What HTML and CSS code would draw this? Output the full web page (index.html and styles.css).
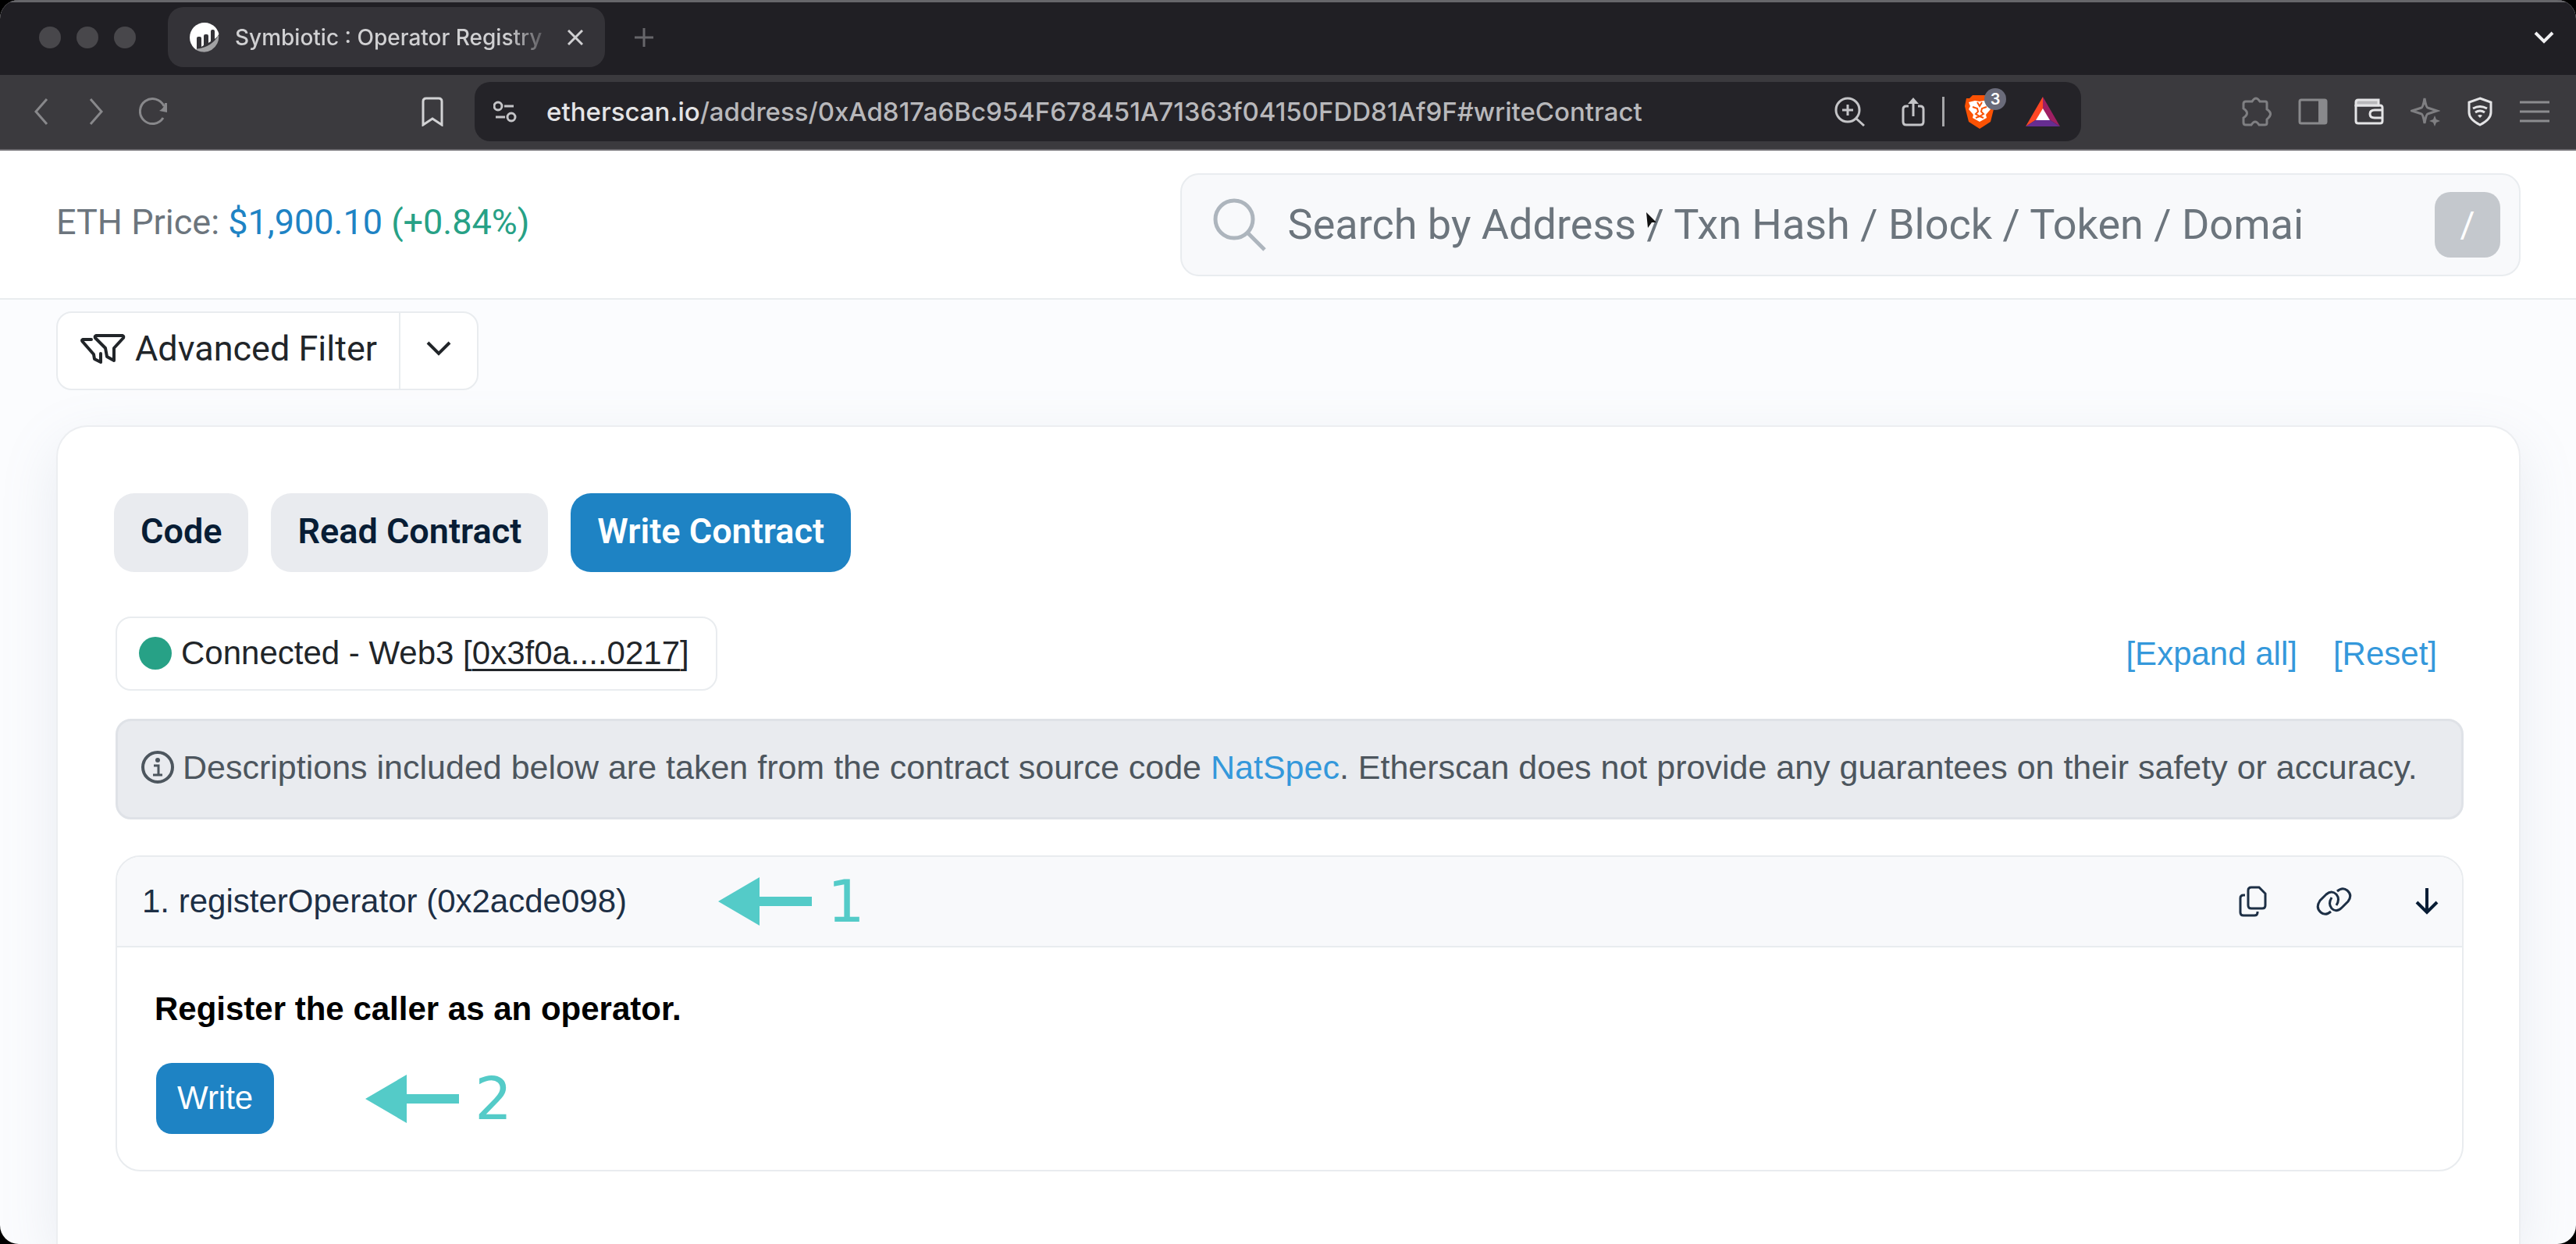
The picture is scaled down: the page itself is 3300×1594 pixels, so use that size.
FILE: index.html
```html
<!DOCTYPE html>
<html lang="en">
<head>
<meta charset="utf-8">
<meta name="viewport" content="width=device-width, initial-scale=1">
<title>Symbiotic : Operator Registry</title>
<link rel="stylesheet" href="styles.css">
</head>
<body>
<div class="window">
  <div class="tabstrip">
    <div class="lights"><span class="light"></span><span class="light"></span><span class="light"></span></div>
    <div class="tab">
      <svg class="favicon" viewBox="0 0 38 38" width="38" height="38" aria-hidden="true">
        <circle cx="19" cy="19" r="19" fill="#fff"/>
        <path d="M9 38V20q0-2 2-2h2q2 0 2 2v11l3-2V17q0-2 2-2h2q2 0 2 2v9l3-2V11q0-2 2-2h1q2 0 2 2v10q4-3 6-7v24z" fill="#343338"/>
        <path d="M7 34Q28 32 37 16A19 19 0 0 1 7 34z" fill="#a2a2a4"/>
      </svg>
      <span class="tab-title">Symbiotic : Operator Registry</span>
      <button class="icon-btn" aria-label="Close tab"><svg viewBox="0 0 20 20" width="20" height="20"><path d="M1 1l18 18M19 1L1 19" stroke="#d0d0d2" stroke-width="3" fill="none"/></svg></button>
    </div>
    <button class="icon-btn new-tab" aria-label="New tab"><svg viewBox="0 0 24 24" width="24" height="24"><path d="M12 0v24M0 12h24" stroke="#66666a" stroke-width="3"/></svg></button>
    <button class="icon-btn tab-menu" aria-label="Tab list"><svg viewBox="0 0 26 16" width="26" height="16"><path d="M2 2l11 11L24 2" fill="none" stroke="#f0f0f2" stroke-width="4"/></svg></button>
  </div>
  <div class="toolbar">
    <div class="nav">
      <button class="icon-btn" aria-label="Back"><svg viewBox="0 0 18 34" width="18" height="34"><path d="M16 1L2 17l14 16" fill="none" stroke="#88888b" stroke-width="3"/></svg></button>
      <button class="icon-btn" aria-label="Forward"><svg viewBox="0 0 24 34" width="24" height="34"><path d="M8 1l14 16L8 33" fill="none" stroke="#88888b" stroke-width="3"/></svg></button>
      <button class="icon-btn" aria-label="Reload"><svg viewBox="0 0 38 38" width="38" height="38"><path d="M31 27A16 16 0 1 1 32 12" fill="none" stroke="#88888b" stroke-width="3"/><path d="M36 8v12l-10-2q6-3 7-10z" fill="#88888b"/></svg></button>
    </div>
    <button class="icon-btn" aria-label="Bookmark"><svg viewBox="0 0 28 38" width="28" height="38"><path d="M2 36V6q0-4 4-4h16q4 0 4 4v30l-12-8z" fill="none" stroke="#d2d2d4" stroke-width="3"/></svg></button>
    <div class="urlbar">
      <svg viewBox="0 0 30 28" width="30" height="28" fill="none" stroke="#c4c4c7" stroke-width="3" aria-hidden="true"><circle cx="6" cy="7" r="5"/><path d="M14 7h12M3 21h12"/><circle cx="23" cy="21" r="5"/></svg>
      <span class="url"><b>etherscan.io</b>/address/0xAd817a6Bc954F678451A71363f04150FDD81Af9F#writeContract</span>
      <div class="url-actions">
        <button class="icon-btn" aria-label="Zoom"><svg viewBox="0 0 40 38" width="40" height="38" fill="none" stroke="#c4c4c7" stroke-width="3"><circle cx="17" cy="17" r="15"/><path d="M17 10v14M10 17h14M28 28l10 9"/></svg></button>
        <button class="icon-btn" aria-label="Share"><svg viewBox="0 0 30 38" width="30" height="38" fill="none" stroke="#c4c4c7" stroke-width="3"><path d="M9 12H6q-4 0-4 4v16q0 4 4 4h18q4 0 4-4V16q0-4-4-4h-3"/><path d="M15 25V4"/><path d="M8 9l7-8 7 8z" fill="#c4c4c7" stroke="none"/></svg></button>
      </div>
      <span class="divider"></span>
      <button class="icon-btn shields" aria-label="Shields">
        <svg viewBox="0 0 38 44" width="38" height="44"><path d="M10 1h18l4 4h4l2 10-5 20-14 9L5 35 0 15 2 5h4z" fill="#fb5204"/><path d="M5 10l8-2 6 1 6-1 8 2-2 5 2 4-6 7 1 4-9 5-9-5 1-4-6-7 2-4z" fill="#fff"/><path d="M10 16l6 2 1 4-3 3 5 3 5-3-3-3 1-4 6-2M16 10l3 5 3-5M14 30l5-2 5 2" fill="none" stroke="#fb5204" stroke-width="2"/></svg>
        <span class="badge">3</span>
      </button>
      <button class="icon-btn" aria-label="Rewards"><svg viewBox="0 0 44 38" width="44" height="38"><path d="M22 0v16l-8 13L0 38z" fill="#ff4724"/><path d="M22 0l22 38-14-9-8-13z" fill="#9e1f63"/><path d="M0 38l14-9h16l14 9z" fill="#662d91"/><path d="M22 15l9 15H13z" fill="#fff"/></svg></button>
    </div>
    <div class="extensions">
      <button class="icon-btn" aria-label="Extensions"><svg viewBox="0 0 38 38" width="38" height="38" fill="none" stroke="#7f7f82" stroke-width="3"><path d="M5 6h8q5-8 10 0h7q2 0 2 2v8q8 5 2 11l-2 2v5q0 2-3 2h-7q-5-8-10 0H5q-3 0-3-3v-6q9-6 0-12V9q0-3 3-3z"/></svg></button>
      <button class="icon-btn" aria-label="Sidebar"><svg viewBox="0 0 38 34" width="38" height="34"><rect x="2" y="2" width="34" height="30" rx="2" fill="none" stroke="#89898c" stroke-width="3"/><path d="M26 2h11v30H26z" fill="#89898c"/></svg></button>
      <button class="icon-btn" aria-label="Wallet"><svg viewBox="0 0 38 34" width="38" height="34" fill="none" stroke="#e4e4e6" stroke-width="3"><path d="M2 8v21q0 3 3 3h28q3 0 3-3V12q0-3-3-3H3"/><path d="M2 9V5q0-3 3-3h26v7z" fill="#b8b8bb"/><path d="M36 15H26q-6 0-6 5t6 5h10"/></svg></button>
      <button class="icon-btn" aria-label="Assistant"><svg viewBox="0 0 38 38" width="38" height="38" fill="none" stroke="#7f7f82" stroke-width="3"><path d="M18 2q2 12 4 12l12 4-12 4q-2 0-4 12-2-12-4-12L2 18l12-4q2 0 4-12z"/><path d="M31 24l2 5 5 2-5 2-2 5-2-5-5-2 5-2z" fill="#7f7f82" stroke="none"/></svg></button>
      <button class="icon-btn" aria-label="VPN"><svg viewBox="0 0 34 38" width="34" height="38" fill="none" stroke="#e4e4e6" stroke-width="3"><path d="M17 2l14 5v13q0 9-14 16Q3 29 3 20V7z"/><path d="M8 15q9-5 18 0M11 20q6-4 12 0"/><path d="M14 24q3-2 6 0l-3 3z" fill="#e4e4e6" stroke="none"/></svg></button>
      <button class="icon-btn" aria-label="Menu"><svg viewBox="0 0 38 28" width="38" height="28" stroke="#8c8c8f" stroke-width="3"><path d="M0 2h38M0 14h38M0 26h38"/></svg></button>
    </div>
  </div>

  <header class="site-header">
    <p class="price">ETH Price: <a href="#price">$1,900.10</a> <span class="up">(+0.84%)</span></p>
    <form class="search">
      <svg viewBox="0 0 68 68" width="68" height="68" fill="none" stroke="#adb5bd" stroke-width="5" aria-hidden="true"><circle cx="27" cy="27" r="24"/><path d="M44 44l22 22"/></svg>
      <input class="search-input" type="text" aria-label="Search" placeholder="Search by Address / Txn Hash / Block / Token / Domai">
      <kbd class="key">/</kbd>
      <svg class="pointer" viewBox="0 0 16 22" width="16" height="22" aria-hidden="true"><path d="M1 0l13 13H8l-5 7z" fill="#111"/></svg>
    </form>
  </header>

  <main class="page">
    <div class="filter">
      <button class="filter-main">
        <svg viewBox="0 0 58 40" width="58" height="40" fill="none" stroke="#212529" stroke-width="4" stroke-linejoin="round" stroke-linecap="round" aria-hidden="true"><path d="M20 3h34q2 1 1 3L43 19v16l-9-5-2-11L19 6q-1-2 1-3z"/><path d="M14 8H3q-2 1 0 3l14 16 1 6 8 4V26"/></svg>
        Advanced Filter
      </button>
      <button class="filter-more" aria-label="More filters"><svg viewBox="0 0 32 20" width="32" height="20"><path d="M2 2l14 14L30 2" fill="none" stroke="#212529" stroke-width="4"/></svg></button>
    </div>

    <section class="card">
      <nav class="pills">
        <button class="pill">Code</button>
        <button class="pill">Read Contract</button>
        <button class="pill active">Write Contract</button>
      </nav>
      <div class="status-row">
        <div class="connected"><span class="dot"></span><span>Connected - Web3 [<a href="#account">0x3f0a....0217</a>]</span></div>
        <div class="links"><a href="#expand">[Expand all]</a><a href="#reset">[Reset]</a></div>
      </div>
      <div class="alert">
        <svg viewBox="0 0 44 44" width="44" height="44" aria-hidden="true"><circle cx="22" cy="22" r="19" fill="none" stroke="#4d565e" stroke-width="4"/><circle cx="22" cy="13" r="3" fill="#4d565e"/><path d="M17 20h6v11M16 32h12" fill="none" stroke="#4d565e" stroke-width="3"/></svg>
        <p>Descriptions included below are taken from the contract source code <a href="#natspec">NatSpec</a>. Etherscan does not provide any guarantees on their safety or accuracy.</p>
      </div>
      <article class="method">
        <div class="method-head">
          <h2>1. registerOperator (0x2acde098)</h2>
          <div class="mark"><svg viewBox="0 0 120 62" width="120" height="62" aria-hidden="true"><path d="M0 31L53 0v25h67v12H53v25z" fill="#54cbc8"/></svg><span>1</span></div>
          <div class="method-actions">
            <button class="icon-btn" aria-label="Copy"><svg viewBox="0 0 36 40" width="36" height="40" fill="none" stroke="#1d2f45" stroke-width="3"><path d="M16 2h10l8 8v15q0 4-4 4H16q-4 0-4-4V6q0-4 4-4z"/><path d="M8 12H6q-4 0-4 4v18q0 4 4 4h14q4 0 4-4v-1"/></svg></button>
            <button class="icon-btn" aria-label="Link"><svg viewBox="0 0 46 36" width="46" height="36" fill="none" stroke="#1d2f45" stroke-width="3"><path d="M19 31Q12 37 6 32Q-1 26 5 17L13 9Q20 3 26 9Q31 15 26 23"/><path d="M27 5Q34-1 40 4Q47 10 41 18L33 26Q26 33 20 27Q15 21 20 13"/></svg></button>
            <button class="icon-btn collapse" aria-label="Collapse"><svg viewBox="0 0 30 34" width="30" height="34" fill="none" stroke="#081d35" stroke-width="4"><path d="M15 0v31M2 18l13 13 13-13"/></svg></button>
          </div>
        </div>
        <div class="method-body">
          <p class="desc">Register the caller as an operator.</p>
          <div class="run">
            <button class="write">Write</button>
            <div class="mark"><svg viewBox="0 0 120 62" width="120" height="62" aria-hidden="true"><path d="M0 31L53 0v25h67v12H53v25z" fill="#54cbc8"/></svg><span>2</span></div>
          </div>
        </div>
      </article>
    </section>
  </main>
</div>
</body>
</html>
```
FILE: styles.css
```css
* { box-sizing: border-box; }
html { background: #000; }
body { margin: 0; font-family: "Liberation Sans", Arial, sans-serif; font-size: 42px; line-height: 48px; color: #212529; }
p, h2 { margin: 0; }
a { color: #3498db; text-decoration: none; }
button { font: inherit; color: inherit; border: 0; background: none; padding: 0; }
svg { display: block; flex: none; }

.window { display: flex; flex-direction: column; height: 100vh; border-radius: 24px; overflow: hidden; background: #fbfcfe; }
.icon-btn { display: flex; align-items: center; justify-content: center; flex: none; }

.tabstrip { display: flex; align-items: center; padding: 6px 28px 10px 50px; background: #201f24; border-top: 3px solid #66666a; flex: none; }
.lights { display: flex; gap: 20px; margin-right: 41px; }
.light { width: 28px; height: 28px; border-radius: 50%; background: #48474b; }
.tab { display: flex; align-items: center; width: 560px; height: 77px; padding: 0 28px; border-radius: 20px; background: #343338; }
.tab-title { flex: 1; margin: 0 16px 0 20px; white-space: nowrap; font: 500 28px/40px Inter, sans-serif; color: #d0d0d2; -webkit-mask-image: linear-gradient(90deg, #000 85%, transparent); mask-image: linear-gradient(90deg, #000 85%, transparent); }
.new-tab { margin-left: 38px; }
.tab-menu { margin-left: auto; }

.toolbar { display: flex; align-items: center; padding: 9px 34px 10px 44px; background: #3b3a3e; border-bottom: 2px solid #6b6a6e; flex: none; }
.nav { display: flex; align-items: center; gap: 46px; margin-right: 324px; }
.urlbar { display: flex; align-items: center; flex: 1; height: 76px; margin: 0 206px 0 40px; padding: 0 27px 0 24px; border-radius: 20px; background: #242328; }
.url { flex: 1; margin-left: 38px; white-space: nowrap; font: 500 33px/40px Inter, sans-serif; color: #b8b8bb; }
.url b { font-weight: 500; color: #e4e4e6; }
.url-actions { display: flex; gap: 46px; }
.divider { width: 3px; height: 38px; margin: 0 26px 0 22px; background: #a5a5a8; }
.shields { position: relative; margin-right: 40px; }
.badge { position: absolute; left: 25px; top: -8px; width: 28px; height: 28px; border-radius: 50%; background: #6a6b7a; color: #fff; font: 600 20px/28px Inter, sans-serif; text-align: center; }
.extensions { display: flex; align-items: center; gap: 34px; }

.site-header { display: flex; align-items: center; justify-content: space-between; padding: 29px 71px 28px 72px; background: #fff; border-bottom: 2px solid #e9ecef; font-family: Roboto, sans-serif; }
.price { font-size: 45px; line-height: 56px; color: #6c757d; margin-bottom: 6px; }
.price a { color: #1e83c4; }
.up { color: #27a186; }
.search { position: relative; display: flex; align-items: center; width: 54.4%; height: 132px; padding: 0 24px 0 40px; border: 2px solid #e9ecef; border-radius: 24px; background: #f8f9fb; }
.search-input { flex: 1; min-width: 0; margin-left: 28px; padding: 0; border: 0; outline: 0; background: none; font: 54px/64px Roboto, sans-serif; color: #6c757d; }
.search-input::placeholder { color: #6c757d; opacity: 1; }
.key { width: 84px; height: 84px; border-radius: 20px; background: #c4c8cd; color: #fff; font: 46px/84px Roboto, sans-serif; text-align: center; }
.pointer { position: absolute; left: 594px; top: 48px; }

.page { display: flex; flex-direction: column; flex: 1; min-height: 0; padding: 15px 71px 0 72px; }
.filter { display: flex; align-self: flex-start; margin-bottom: 45px; border: 2px solid #e9ecef; border-radius: 20px; background: #fff; font-family: Roboto, sans-serif; font-size: 45px; line-height: 56px; }
.filter-main { display: flex; align-items: center; gap: 12px; padding: 18px 28px 23px 29px; border-right: 2px solid #e9ecef; }
.filter-more { padding: 0 33px 6px; }

.card { flex: 1; padding: 85px 71px 0 74px; border: 2px solid #eceef1; border-bottom: 0; border-radius: 40px 40px 0 0; background: #fff; box-shadow: 0 24px 72px rgba(130, 140, 165, 0.15); }
.pills { display: flex; gap: 29px; margin: 0 0 57px -2px; font: 600 45px/56px Roboto, sans-serif; color: #081d35; }
.pill { padding: 21px 34px 24px; border-radius: 26px; background: #e9ebef; }
.pill.active { background: #1e83c4; color: #fff; }
.status-row { display: flex; align-items: center; justify-content: space-between; margin-bottom: 36px; }
.connected { display: flex; align-items: center; gap: 12px; padding: 21px 34px 22px 28px; border: 2px solid #e9ecef; border-radius: 20px; }
.connected a { color: inherit; text-decoration: underline; text-decoration-thickness: 3px; text-underline-offset: 6px; }
.dot { width: 42px; height: 42px; border-radius: 50%; background: #27a186; }
.links { display: flex; gap: 46px; margin-right: 34px; }
.alert { display: flex; align-items: center; gap: 10px; padding: 35px 29px 40px; margin-bottom: 46px; border: 3px solid #dfe2e7; border-radius: 20px; background: #e9ebef; color: #4d565e; font-size: 43px; white-space: nowrap; }
.method { border: 2px solid #e9ecef; border-radius: 32px; overflow: hidden; }
.method-head { display: flex; align-items: center; padding: 26px 30px 26px 32px; background: #f8f9fb; border-bottom: 2px solid #e9ecef; }
.method-head h2 { font: inherit; color: #1d2f45; }
.mark { display: flex; align-items: center; gap: 20px; margin-left: 117px; font: 75px/62px "DejaVu Sans", sans-serif; color: #54cbc8; }
.method-actions { display: flex; align-items: center; gap: 63px; margin-left: auto; }
.collapse { margin-left: 18px; }
.method-body { padding: 55px 48px 46px; }
.desc { font-weight: 700; color: #000; margin-bottom: 45px; }
.run { display: flex; align-items: center; padding-left: 2px; }
.write { padding: 21px 27px 22px; border-radius: 20px; background: #1e83c4; color: #fff; }
```
